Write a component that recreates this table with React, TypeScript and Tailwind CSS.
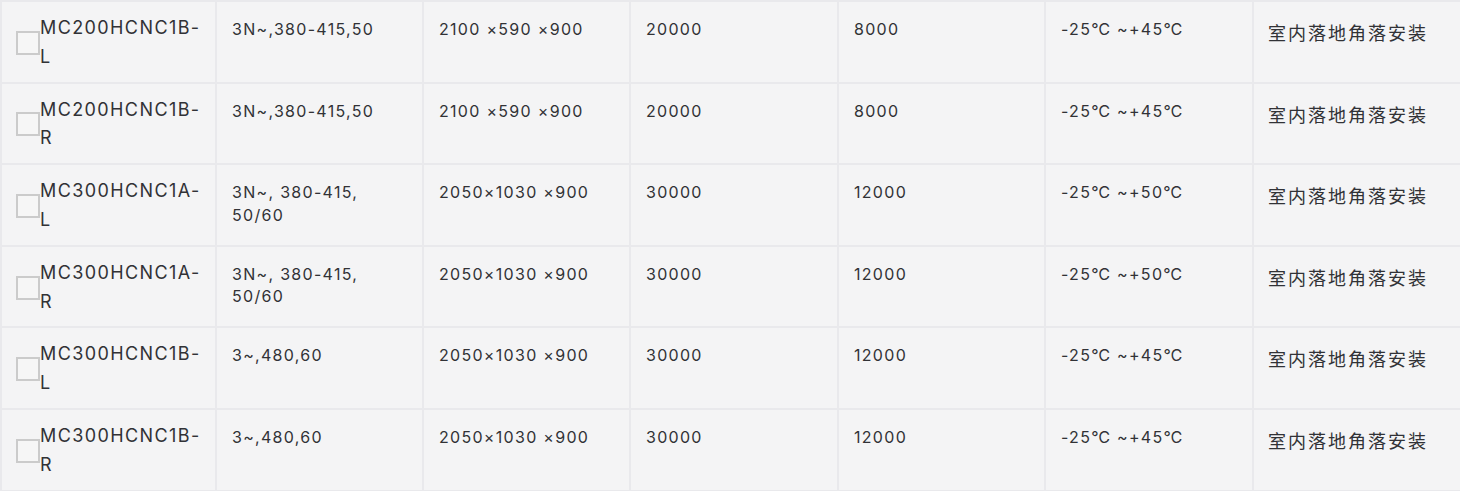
import React from "react";

type Row = {
  model: string;
  power: string;
  size: string;
  a: string;
  b: string;
  temp: string;
  install: string;
};

const rows: Row[] = [
  { model: "MC200HCNC1B-L", power: "3N~,380-415,50", size: "2100 ×590 ×900", a: "20000", b: "8000", temp: "-25℃ ~+45℃", install: "室内落地角落安装" },
  { model: "MC200HCNC1B-R", power: "3N~,380-415,50", size: "2100 ×590 ×900", a: "20000", b: "8000", temp: "-25℃ ~+45℃", install: "室内落地角落安装" },
  { model: "MC300HCNC1A-L", power: "3N~, 380-415, 50/60", size: "2050×1030 ×900", a: "30000", b: "12000", temp: "-25℃ ~+50℃", install: "室内落地角落安装" },
  { model: "MC300HCNC1A-R", power: "3N~, 380-415, 50/60", size: "2050×1030 ×900", a: "30000", b: "12000", temp: "-25℃ ~+50℃", install: "室内落地角落安装" },
  { model: "MC300HCNC1B-L", power: "3~,480,60", size: "2050×1030 ×900", a: "30000", b: "12000", temp: "-25℃ ~+45℃", install: "室内落地角落安装" },
  { model: "MC300HCNC1B-R", power: "3~,480,60", size: "2050×1030 ×900", a: "30000", b: "12000", temp: "-25℃ ~+45℃", install: "室内落地角落安装" },
];

function Cell({ children }: { children: React.ReactNode }) {
  return (
    <div className="bg-[#f4f4f5] pl-[15px] pr-[12px] pt-[16px] text-[16px] leading-[22.4px] tracking-[1.3px] text-[#313236]">
      {children}
    </div>
  );
}

export default function App() {
  return (
    <div
      className="w-[1460px] h-[491px] overflow-hidden bg-white"
      style={{ fontFamily: '"Inter", "Noto Sans CJK SC", sans-serif' }}
    >
      <div className="grid w-max grid-cols-[213px_205px_205px_206px_205px_206px_206px] gap-[2px] bg-[#e9e9ec] p-[2px]">
        {rows.map((r, i) => (
          <React.Fragment key={i}>
            <div className="flex items-center bg-[#f4f4f5] pl-[14px] pr-[10px] pt-[12px] pb-[10px] text-[#313236]">
              <span className="h-[24px] w-[24px] shrink-0 border-2 border-[#cbcbcb] bg-[#f6f6f6]" />
              <span className="text-[18px] leading-[28.8px] tracking-[1.4px]">{r.model}</span>
            </div>
            <Cell>{r.power}</Cell>
            <Cell>{r.size}</Cell>
            <Cell>{r.a}</Cell>
            <Cell>{r.b}</Cell>
            <Cell>{r.temp}</Cell>
            <div className="bg-[#f4f4f5] pl-[14px] pt-[20px] text-[18px] leading-[24px] tracking-[2px] text-[#313236]">
              {r.install}
            </div>
          </React.Fragment>
        ))}
      </div>
    </div>
  );
}
